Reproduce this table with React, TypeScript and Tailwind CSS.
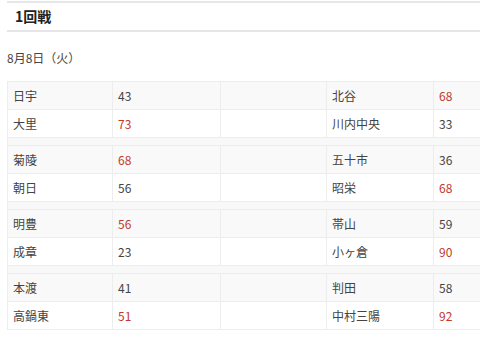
const font = { fontFamily: '"Noto Sans CJK JP", "Noto Sans", sans-serif' };

type Team = { name: string; score: number; win: boolean };
type Game = [Team, Team];
type Match = { left: Game; right: Game };

const t = (name: string, score: number, win = false): Team => ({ name, score, win });

const matches: Match[] = [
  { left: [t('日宇', 43), t('大里', 73, true)], right: [t('北谷', 68, true), t('川内中央', 33)] },
  { left: [t('菊陵', 68, true), t('朝日', 56)], right: [t('五十市', 36), t('昭栄', 68, true)] },
  { left: [t('明豊', 56, true), t('成章', 23)], right: [t('帯山', 59), t('小ヶ倉', 90, true)] },
  { left: [t('本渡', 41), t('高鍋東', 51, true)], right: [t('判田', 58), t('中村三陽', 92, true)] },
];

function Cell({ team }: { team: Team }) {
  return (
    <>
      <div className="flex items-center border-r border-[#ededed] pl-[5px]">{team.name}</div>
      <div className={`flex items-center border-r border-[#ededed] pl-[5px] ${team.win ? 'text-[#c0392b]' : ''}`}>
        {team.score}
      </div>
    </>
  );
}

export default function App() {
  return (
    <div className="h-[349px] w-[480px] overflow-hidden bg-white text-[12px] text-[#444]" style={font}>
      <div className="ml-[7px] mt-[1px] w-[540px] border-y-[2px] border-[#e6e6e6] pl-[8px] h-[31px] flex items-center text-[14px] font-bold text-[#222]">
        1回戦
      </div>
      <div className="ml-[7px] mt-[18px] h-[16px] leading-[16px]">8月8日（火）</div>
      <div className="ml-[7px] mt-[15px] w-[535px] border-l border-t border-[#ededed]">
        {matches.map((m, i) => (
          <div key={i}>
            {i > 0 && <div className="h-[8px] bg-[#f8f8f8] border-b border-[#ededed]" />}
            {[0, 1].map((r) => (
              <div
                key={r}
                className={`grid grid-cols-[105px_108px_106px_107px_108px] h-[28px] border-b border-[#ededed] ${
                  r === 0 ? 'bg-[#f9f9f9]' : 'bg-white'
                }`}
              >
                <Cell team={m.left[r]} />
                <div className="border-r border-[#ededed]" />
                <Cell team={m.right[r]} />
              </div>
            ))}
          </div>
        ))}
      </div>
    </div>
  );
}
